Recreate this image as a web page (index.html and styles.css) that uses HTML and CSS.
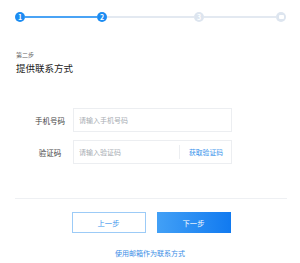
FILE: index.html
```html
<!DOCTYPE html>
<html lang="zh-CN">
<head>
    <meta charset="UTF-8">
    <title>提供联系方式</title>
    <link rel="stylesheet" href="styles.css">
</head>
<body>
    <div class="steps">
        <span class="dot done">1</span>
        <span class="bar done"></span>
        <span class="dot done">2</span>
        <span class="bar"></span>
        <span class="dot">3</span>
        <span class="bar"></span>
        <span class="dot"><i class="flag"></i></span>
    </div>

    <div class="heading">
        <div class="step-no">第二步</div>
        <h1>提供联系方式</h1>
    </div>

    <div class="form">
        <div class="row">
            <label>手机号码</label>
            <div class="field">
                <input type="text" placeholder="请输入手机号码">
            </div>
        </div>
        <div class="row">
            <label>验证码</label>
            <div class="field">
                <input type="text" placeholder="请输入验证码">
                <a class="code-btn" href="#">获取验证码</a>
            </div>
        </div>
    </div>

    <div class="actions">
        <button class="btn prev">上一步</button>
        <button class="btn next">下一步</button>
    </div>

    <a class="alt-link" href="#">使用邮箱作为联系方式</a>
</body>
</html>
```

FILE: styles.css
```css
body {
    margin: 0;
    background: #fff;
    font-family: "Noto Sans CJK SC", "Liberation Sans", sans-serif;
    color: #333;
    width: 300px;
}

.steps {
    display: grid;
    grid-template-columns: 10px 72px 10px 87px 10px 72px 10px;
    align-items: center;
    padding: 12px 0 0 15px;
    height: 10px;
}

.dot {
    width: 10px;
    height: 10px;
    border-radius: 50%;
    background: #dde5ef;
    color: #fff;
    font-size: 7px;
    font-weight: bold;
    line-height: 10px;
    text-align: center;
    display: flex;
    align-items: center;
    justify-content: center;
}

.dot.done {
    background: #1c8cf2;
}

.flag {
    width: 5px;
    height: 4px;
    border-radius: 1px;
    background: #fff;
}

.bar {
    height: 1.5px;
    background: #e3e9f1;
}

.bar.done {
    background: #4aa3f5;
}

.heading {
    padding: 0 16px;
    margin-top: 29px;
}

.step-no {
    font-size: 6px;
    color: #666;
    line-height: 8px;
}

h1 {
    margin: 3px 0 0;
    font-size: 9.5px;
    font-weight: normal;
    color: #222;
    line-height: 12px;
}

.form {
    margin-top: 34px;
    display: flex;
    flex-direction: column;
    gap: 8px;
}

.row {
    display: flex;
    align-items: center;
}

.row label {
    width: 30px;
    margin-left: 35px;
    margin-right: 8px;
    text-align: center;
    font-size: 7.5px;
    color: #444;
}

.field {
    display: flex;
    align-items: center;
    width: 157px;
    height: 22px;
    border: 1px solid #eceef1;
}

.field input {
    flex: 1;
    min-width: 0;
    border: none;
    outline: none;
    height: 100%;
    padding: 0 0 0 5px;
    font-family: inherit;
    font-size: 7px;
    color: #333;
    background: transparent;
}

.field input::placeholder {
    color: #a8adb3;
}

.code-btn {
    border-left: 1px solid #eceef1;
    height: 14px;
    line-height: 14px;
    padding: 0 8px 0 9px;
    font-size: 6.8px;
    color: #3a94ec;
    text-decoration: none;
}

.actions {
    margin: 34px 13px 0 15px;
    padding-top: 13px;
    border-top: 1px solid #eef0f3;
    display: flex;
    justify-content: center;
    gap: 11px;
}

.btn {
    width: 74px;
    height: 21px;
    font-family: inherit;
    font-size: 7.3px;
    border-radius: 0;
    cursor: pointer;
    padding: 0;
}

.prev {
    background: #fff;
    border: 1px solid #9ccbf7;
    color: #3a94ec;
}

.next {
    border: none;
    color: #fff;
    background: linear-gradient(to right, #42a0f6, #117af0);
}

.alt-link {
    display: block;
    text-align: center;
    margin-top: 15px;
    font-size: 7px;
    color: #3a8ee6;
    text-decoration: none;
}
```
